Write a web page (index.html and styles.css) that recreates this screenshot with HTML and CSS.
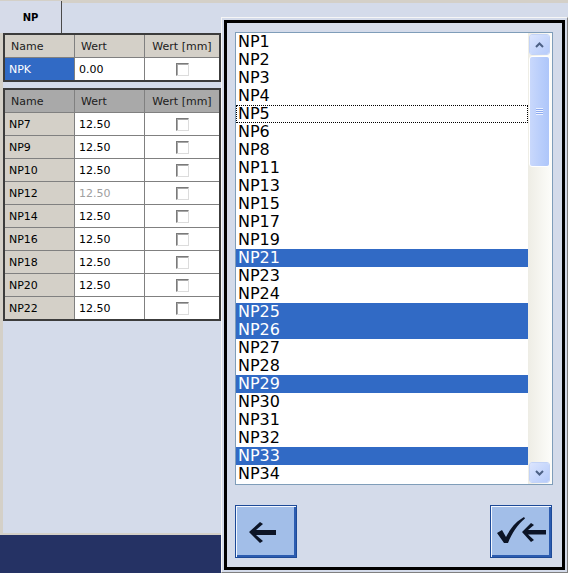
FILE: index.html
```html
<!DOCTYPE html>
<html>
<head>
    <meta charset="UTF-8">
    <title>NP - Auswahl</title>
    <link rel="stylesheet" href="styles.css">
</head>
<body>
    <div class="app">
        <!-- Tab strip -->
        <div class="tabbar">
            <div class="tab">NP</div>
        </div>

        <!-- Tables -->
        <div class="main">
            <div class="panel">
                <div class="grid grid-single">
                    <div class="cell head">Name</div>
                    <div class="cell head">Wert</div>
                    <div class="cell head center">Wert [mm]</div>
                    <div class="cell name selected">NPK</div>
                    <div class="cell value">0.00</div>
                    <div class="cell center"><span class="check"></span></div>
                </div>

                <div class="grid grid-list">
                    <div class="cell head">Name</div>
                    <div class="cell head">Wert</div>
                    <div class="cell head center">Wert [mm]</div>

                    <div class="cell name">NP7</div>
                    <div class="cell value">12.50</div>
                    <div class="cell center"><span class="check"></span></div>

                    <div class="cell name">NP9</div>
                    <div class="cell value">12.50</div>
                    <div class="cell center"><span class="check"></span></div>

                    <div class="cell name">NP10</div>
                    <div class="cell value">12.50</div>
                    <div class="cell center"><span class="check"></span></div>

                    <div class="cell name">NP12</div>
                    <div class="cell value disabled">12.50</div>
                    <div class="cell center"><span class="check"></span></div>

                    <div class="cell name">NP14</div>
                    <div class="cell value">12.50</div>
                    <div class="cell center"><span class="check"></span></div>

                    <div class="cell name">NP16</div>
                    <div class="cell value">12.50</div>
                    <div class="cell center"><span class="check"></span></div>

                    <div class="cell name">NP18</div>
                    <div class="cell value">12.50</div>
                    <div class="cell center"><span class="check"></span></div>

                    <div class="cell name">NP20</div>
                    <div class="cell value">12.50</div>
                    <div class="cell center"><span class="check"></span></div>

                    <div class="cell name">NP22</div>
                    <div class="cell value">12.50</div>
                    <div class="cell center"><span class="check"></span></div>
                </div>
            </div>
        </div>

        <!-- Status bar -->
        <div class="footer"></div>
    </div>

    <!-- Selection dialog (lies over the page) -->
    <div class="dialog">
        <div class="dialog-inner">
            <div class="listbox">
                <div class="items">
                    <div class="item">NP1</div>
                    <div class="item">NP2</div>
                    <div class="item">NP3</div>
                    <div class="item">NP4</div>
                    <div class="item focus">NP5</div>
                    <div class="item">NP6</div>
                    <div class="item">NP8</div>
                    <div class="item">NP11</div>
                    <div class="item">NP13</div>
                    <div class="item">NP15</div>
                    <div class="item">NP17</div>
                    <div class="item">NP19</div>
                    <div class="item selected">NP21</div>
                    <div class="item">NP23</div>
                    <div class="item">NP24</div>
                    <div class="item selected">NP25</div>
                    <div class="item selected">NP26</div>
                    <div class="item">NP27</div>
                    <div class="item">NP28</div>
                    <div class="item selected">NP29</div>
                    <div class="item">NP30</div>
                    <div class="item">NP31</div>
                    <div class="item">NP32</div>
                    <div class="item selected">NP33</div>
                    <div class="item">NP34</div>
                </div>
                <div class="scrollbar">
                    <div class="sb-btn">
                        <svg width="9" height="6" viewBox="0 0 9 6"><polyline points="1,5 4.5,1.5 8,5" fill="none" stroke="#4d6185" stroke-width="2"/></svg>
                    </div>
                    <div class="sb-thumb"><span class="grip"></span></div>
                    <div class="sb-track"></div>
                    <div class="sb-btn">
                        <svg width="9" height="6" viewBox="0 0 9 6"><polyline points="1,1 4.5,4.5 8,1" fill="none" stroke="#4d6185" stroke-width="2"/></svg>
                    </div>
                </div>
            </div>

            <div class="actions">
                <button class="act-btn" title="Zurück">
                    <svg width="60" height="51" viewBox="0 0 60 51">
                        <path d="M13 26 L24 16 L27 18 L20 24 L40 24 L40 29 L20 29 L27 35 L24 37 Z" fill="#0c1426"/>
                    </svg>
                </button>
                <button class="act-btn" title="Übernehmen">
                    <svg width="60" height="51" viewBox="0 0 60 51">
                        <path d="M6 27 L11 24 L15 31 C20 21 26 15 33 11 L34 12.5 C27 18 21 27 17 37 L13 37 Z" fill="#0c1426"/>
                        <path d="M31 26 L40 17 L43 19 L37 24 L55 24 L55 28.5 L37 28.5 L43 34 L40 36 Z" fill="#0c1426"/>
                    </svg>
                </button>
            </div>
        </div>
    </div>
</body>
</html>
```

FILE: styles.css
```css
body {
    margin: 0;
    background: #d4dbea;
    font-family: "DejaVu Sans", Verdana, sans-serif;
    font-size: 11px;
    color: #000;
}

.app {
    display: flex;
    flex-direction: column;
    width: 568px;
    height: 573px;
}

/* Tab strip */
.tabbar {
    display: flex;
    height: 30px;
    border-top: 3px solid #d4d0c8;
}

.tab {
    width: 61px;
    height: 32px;
    margin-top: -2px;
    border-right: 1px solid #4a4a4a;
    background: #d6dbe9;
    display: flex;
    align-items: center;
    justify-content: center;
    font-weight: bold;
    font-size: 10px;
}

/* Tables */
.main {
    flex: 1;
    display: flex;
}

.panel {
    width: 218px;
    border-left: 3px solid #d4d0c8;
}

.grid {
    display: grid;
    grid-template-columns: 69px 69px 74px;
    grid-auto-rows: 22px;
    gap: 1px;
    background: #808080;
    border: 2px solid #3c3c3c;
}

.grid-list {
    margin-top: 6px;
}

.cell {
    background: #fff;
    display: flex;
    align-items: center;
    padding-left: 4px;
    white-space: nowrap;
}

.cell.head {
    background: #d4d0c8;
    padding-left: 6px;
    color: #202020;
}

.grid-list .cell.head {
    background: #a9a9a9;
}

.grid-list .cell.name {
    background: #d4d0c8;
}

.cell.center {
    justify-content: center;
    padding-left: 0;
}

.cell.selected {
    background: #316ac5;
    color: #fff;
}

.cell.disabled {
    color: #a0a0a0;
}

.check {
    width: 11px;
    height: 11px;
    background: #fff;
    border: 1px solid;
    border-color: #7a7a7a #dcdcdc #dcdcdc #7a7a7a;
    box-shadow: inset 1px 1px 0 #a8a8a8;
}

/* Status bar */
.footer {
    height: 38px;
    border-top: 2px solid #d4d0c8;
    background: #253264;
}

/* Dialog */
.dialog {
    position: absolute;
    left: 221px;
    top: 17px;
    width: 347px;
    height: 556px;
    box-sizing: border-box;
    border: 1px solid;
    border-color: #f6f6f6 #808080 #808080 #f6f6f6;
    padding: 2px;
    background: #d4dbea;
}

.dialog-inner {
    height: 100%;
    box-sizing: border-box;
    border: 3px solid #000;
    padding: 9px 9px 0 8px;
    display: flex;
    flex-direction: column;
}

.listbox {
    width: 318px;
    height: 453px;
    box-sizing: border-box;
    border: 1px solid #7f9db9;
    background: #fff;
    display: flex;
}

.items {
    flex: 1;
    overflow: hidden;
}

.item {
    height: 18px;
    line-height: 18px;
    padding-left: 2px;
    font-size: 16px;
}

.item.selected {
    background: #316ac5;
    color: #fff;
}

.item.focus {
    outline: 1px dotted #000;
    outline-offset: -1px;
}

/* Scroll bar */
.scrollbar {
    width: 24px;
    display: flex;
    flex-direction: column;
    background: linear-gradient(to right, #eeede5, #fdfdfa);
    padding: 1px 2px 1px 1px;
    box-sizing: border-box;
}

.sb-btn {
    height: 21px;
    box-sizing: border-box;
    border: 1px solid #fff;
    border-radius: 3px;
    outline: 1px solid #c3d3f6;
    outline-offset: -1px;
    background: linear-gradient(135deg, #dbe5fe, #b6cbfa);
    display: flex;
    align-items: center;
    justify-content: center;
}

.sb-thumb {
    height: 111px;
    margin-top: 1px;
    box-sizing: border-box;
    border: 1px solid #fff;
    border-radius: 3px;
    background: linear-gradient(to right, #c9d8fc, #b8cdfb 60%, #aec6fa);
    display: flex;
    align-items: center;
    justify-content: center;
}

.grip {
    width: 7px;
    height: 7px;
    background: repeating-linear-gradient(to bottom, #eef3ff 0 1px, #8daaf0 1px 2px);
}

.sb-track {
    flex: 1;
}

/* Dialog buttons */
.actions {
    display: flex;
    justify-content: space-between;
    margin-top: 20px;
    width: 317px;
}

.act-btn {
    width: 62px;
    height: 53px;
    padding: 0;
    box-sizing: border-box;
    border: 1px solid #1d4a98;
    background: #a2bee8;
    box-shadow: inset 1px 1px 0 #f4f8ff, inset -2px -2px 0 #2c5cb0;
    display: flex;
    align-items: center;
    justify-content: center;
}
```
